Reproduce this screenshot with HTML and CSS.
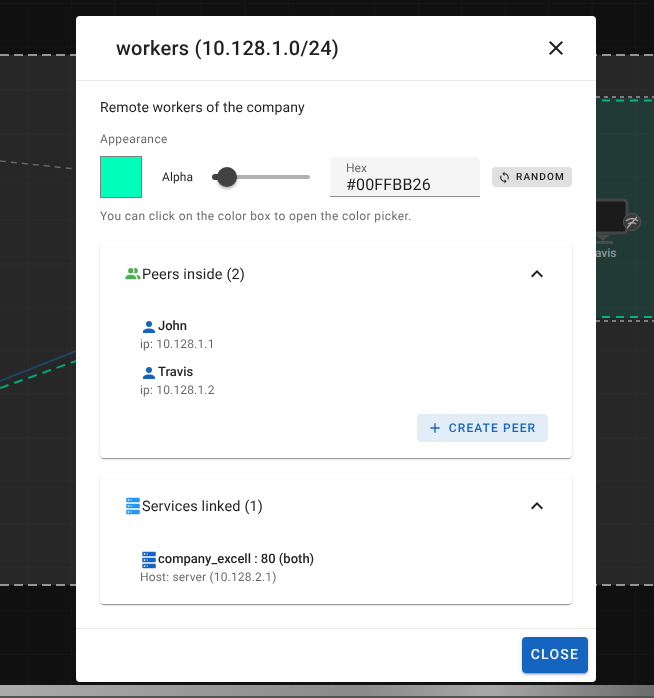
FILE: index.html
```html
<!DOCTYPE html>
<html lang="en">
<head>
<meta charset="utf-8">
<title>workers</title>
<link rel="stylesheet" href="styles.css">
</head>
<body>
<div class="canvas">
  <svg class="canvas-art" width="654" height="698" viewBox="0 0 654 698">
    <defs>
      <pattern id="grid" width="43.4" height="43.4" patternUnits="userSpaceOnUse" x="-16" y="3">
        <path d="M43.4 0H0V43.4" fill="none" stroke="#fff" stroke-opacity=".035"/>
      </pattern>
      <linearGradient id="strip" x1="0" x2="1" y1="0" y2="0">
        <stop offset="0" stop-color="#ababab"/>
        <stop offset=".55" stop-color="#8a8a8a"/>
        <stop offset=".75" stop-color="#a8a8a8"/>
        <stop offset="1" stop-color="#6b6b6b"/>
      </linearGradient>
    </defs>
    <rect width="654" height="698" fill="#101010"/>
    <rect y="55" width="654" height="530" fill="#272727"/>
    <rect x="560" y="98" width="94" height="220" fill="#213a35"/>
    <rect width="654" height="698" fill="url(#grid)"/>
    <path d="M0 55H654M0 585H654" stroke="#bdbdbd" stroke-width="1.5" stroke-dasharray="9 5" fill="none"/>
    <path d="M596 97H654M596 321H654" stroke="#9a9a9a" stroke-width="1.5" stroke-dasharray="4 4" fill="none"/>
    <path d="M602 100.5H654M602 317H654" stroke="#00b486" stroke-width="2" stroke-dasharray="8 6" fill="none"/>
    <path d="M0 161L76 169" stroke="#666" stroke-width="1.5" stroke-dasharray="6 5" fill="none"/>
    <path d="M0 381L76 351" stroke="#1d4464" stroke-width="2" fill="none"/>
    <path d="M0 388L76 361" stroke="#00a678" stroke-width="2" stroke-dasharray="9 6" fill="none"/>
    <rect x="560" y="200" width="67" height="33" rx="4" fill="#1b1b1b" stroke="#444" stroke-width="3"/>
    <path d="M596 235H610L603 241Z" fill="#4a4a4a"/>
    <rect x="590" y="241" width="23" height="3" fill="#4a4a4a"/>
    <circle cx="632" cy="222" r="8.5" fill="#3a3a3a" stroke="#555"/>
    <path d="M626 221Q632 216 638 221M628 224Q632 221 636 224M627 228L637 217" stroke="#aaa" stroke-width="1.3" fill="none"/>
    <rect y="685" width="654" height="13" fill="url(#strip)"/>
    <rect y="696" width="654" height="2" fill="#555"/>
  </svg>
  <span class="canvas-label">Travis</span>
</div>

<section class="dialog">
  <header class="dialog-title">
    <h2>workers (10.128.1.0/24)</h2>
    <svg class="close-icon" viewBox="0 0 24 24" width="24" height="24"><path d="M19 6.41 17.59 5 12 10.59 6.41 5 5 6.41 10.59 12 5 17.59 6.41 19 12 13.41 17.59 19 19 17.59 13.41 12z"/></svg>
  </header>

  <div class="dialog-content">
    <p class="description">Remote workers of the company</p>
    <p class="section-label">Appearance</p>
    <div class="appearance-row">
      <div class="swatch"></div>
      <span class="alpha-label">Alpha</span>
      <div class="slider"><span class="slider-fill"></span><span class="slider-thumb"></span></div>
      <div class="hex-field">
        <span class="hex-label">Hex</span>
        <span class="hex-value">#00FFBB26</span>
      </div>
      <button class="random-btn">
        <svg viewBox="0 0 24 24" width="13" height="13"><path d="M12 4V1L8 5l4 4V6c3.31 0 6 2.69 6 6 0 1.01-.25 1.97-.7 2.8l1.46 1.46C19.54 15.03 20 13.57 20 12c0-4.42-3.58-8-8-8zm0 14c-3.31 0-6-2.69-6-6 0-1.01.25-1.97.7-2.8L5.24 7.74C4.46 8.97 4 10.43 4 12c0 4.42 3.58 8 8 8v3l4-4-4-4v3z"/></svg>
        RANDOM
      </button>
    </div>
    <p class="helper">You can click on the color box to open the color picker.</p>

    <article class="card card-peers">
      <div class="card-head">
        <svg class="head-icon green" viewBox="0 0 24 24" width="18" height="18"><path d="M16 17V19H2V17S2 13 9 13 16 17 16 17M12.5 7.5A3.5 3.5 0 1 0 9 11A3.5 3.5 0 0 0 12.5 7.5M15.94 13A5.32 5.32 0 0 1 18 17V19H22V17S22 13.37 15.94 13M15 4A3.39 3.39 0 0 0 13.07 4.59A5 5 0 0 1 13.07 10.41A3.39 3.39 0 0 0 15 11A3.5 3.5 0 0 0 15 4Z"/></svg>
        <span class="head-title">Peers inside (2)</span>
        <svg class="chevron" viewBox="0 0 24 24" width="24" height="24"><path d="M12 8l-6 6 1.41 1.41L12 10.83l4.59 4.58L18 14z"/></svg>
      </div>
      <ul class="peer-list">
        <li class="item">
          <div class="item-name"><svg class="blue" viewBox="0 0 24 24" width="18" height="18"><path d="M12 4A4 4 0 0 1 16 8A4 4 0 0 1 12 12A4 4 0 0 1 8 8A4 4 0 0 1 12 4M12 14C16.42 14 20 15.79 20 18V20H4V18C4 15.79 7.58 14 12 14Z"/></svg>John</div>
          <div class="item-sub">ip: 10.128.1.1</div>
        </li>
        <li class="item">
          <div class="item-name"><svg class="blue" viewBox="0 0 24 24" width="18" height="18"><path d="M12 4A4 4 0 0 1 16 8A4 4 0 0 1 12 12A4 4 0 0 1 8 8A4 4 0 0 1 12 4M12 14C16.42 14 20 15.79 20 18V20H4V18C4 15.79 7.58 14 12 14Z"/></svg>Travis</div>
          <div class="item-sub">ip: 10.128.1.2</div>
        </li>
      </ul>
      <div class="card-actions">
        <button class="create-btn">
          <svg viewBox="0 0 24 24" width="16" height="16"><path d="M19 13h-6v6h-2v-6H5v-2h6V5h2v6h6v2z"/></svg>
          CREATE PEER
        </button>
      </div>
    </article>

    <article class="card card-services">
      <div class="card-head">
        <svg class="head-icon sky" viewBox="0 0 24 24" width="18" height="18"><path fill-rule="evenodd" d="M4 1H20A1 1 0 0 1 21 2V6A1 1 0 0 1 20 7H4A1 1 0 0 1 3 6V2A1 1 0 0 1 4 1M4 9H20A1 1 0 0 1 21 10V14A1 1 0 0 1 20 15H4A1 1 0 0 1 3 14V10A1 1 0 0 1 4 9M4 17H20A1 1 0 0 1 21 18V22A1 1 0 0 1 20 23H4A1 1 0 0 1 3 22V18A1 1 0 0 1 4 17M9 5H10V3H9V5M9 13H10V11H9V13M9 21H10V19H9V21M5 3V5H7V3H5M5 11V13H7V11H5M5 19V21H7V19H5Z"/></svg>
        <span class="head-title">Services linked (1)</span>
        <svg class="chevron" viewBox="0 0 24 24" width="24" height="24"><path d="M12 8l-6 6 1.41 1.41L12 10.83l4.59 4.58L18 14z"/></svg>
      </div>
      <ul class="peer-list service-list">
        <li class="item">
          <div class="item-name"><svg class="blue" viewBox="0 0 24 24" width="18" height="18"><path fill-rule="evenodd" d="M4 1H20A1 1 0 0 1 21 2V6A1 1 0 0 1 20 7H4A1 1 0 0 1 3 6V2A1 1 0 0 1 4 1M4 9H20A1 1 0 0 1 21 10V14A1 1 0 0 1 20 15H4A1 1 0 0 1 3 14V10A1 1 0 0 1 4 9M4 17H20A1 1 0 0 1 21 18V22A1 1 0 0 1 20 23H4A1 1 0 0 1 3 22V18A1 1 0 0 1 4 17M9 5H10V3H9V5M9 13H10V11H9V13M9 21H10V19H9V21M5 3V5H7V3H5M5 11V13H7V11H5M5 19V21H7V19H5Z"/></svg>company_excell : 80 (both)</div>
          <div class="item-sub">Host: server (10.128.2.1)</div>
        </li>
      </ul>
    </article>
  </div>

  <footer class="dialog-actions">
    <button class="close-btn">CLOSE</button>
  </footer>
</section>
</body>
</html>
```
FILE: styles.css
```css
* { box-sizing: border-box; }
html, body { margin: 0; height: 100%; }
body {
  width: 654px;
  height: 698px;
  overflow: hidden;
  position: relative;
  font-family: Roboto, "Liberation Sans", sans-serif;
  color: rgba(0,0,0,.87);
  background: #101010;
  display: flex;
  justify-content: center;
  padding: 16px 0 0 18px;
  text-rendering: geometricPrecision;
}
p, h2, ul { margin: 0; padding: 0; }
ul { list-style: none; }
button { font-family: inherit; border: 0; cursor: pointer; text-rendering: inherit; }

.canvas { position: absolute; inset: 0; }
.canvas-art { display: block; }
.canvas-label {
  position: absolute;
  left: 584px;
  top: 246px;
  font-size: 12px;
  font-weight: 500;
  color: #8f9795;
}

.dialog {
  position: relative;
  width: 520px;
  height: 666px;
  background: #fff;
  border-radius: 4px;
  display: flex;
  flex-direction: column;
  will-change: transform;
}
.dialog-title {
  height: 65px;
  flex: none;
  display: flex;
  align-items: center;
  justify-content: space-between;
  padding: 0 28px 0 40px;
  border-bottom: 1px solid #e8e8e8;
}
.dialog-title h2 { font-size: 20px; font-weight: 500; letter-spacing: .25px; line-height: 32px; }
.close-icon { fill: rgba(0,0,0,.87); display: block; }

.dialog-content { flex: 1; padding: 17px 24px 0; min-height: 0; }
.description { font-size: 14px; line-height: 20px; letter-spacing: .1px; }
.section-label { font-size: 12px; line-height: 16px; margin-top: 13px; color: rgba(0,0,0,.6); letter-spacing: .4px; }
.appearance-row { display: flex; align-items: center; height: 42px; margin-top: 9px; }
.swatch { width: 42px; height: 42px; background: #00ffbb; border: 1px solid #7f7f7f; flex: none; }
.alpha-label { font-size: 12px; margin-left: 20px; width: 50px; letter-spacing: .1px; }
.slider { position: relative; width: 98px; height: 4px; background: #b0b0b0; border-radius: 2px; flex: none; }
.slider-fill { position: absolute; left: 0; top: -1px; height: 6px; width: 15px; background: #424242; border-radius: 3px; }
.slider-thumb {
  position: absolute;
  left: 5px;
  top: -8px;
  width: 20px;
  height: 20px;
  border-radius: 50%;
  background: #424242;
  box-shadow: 0 2px 3px rgba(0,0,0,.3);
}
.hex-field {
  margin-left: 20px;
  width: 150px;
  height: 40px;
  background: #f5f5f5;
  border-bottom: 1px solid #8e8e8e;
  border-radius: 4px 4px 0 0;
  padding: 4px 16px 0;
  flex: none;
  display: flex;
  flex-direction: column;
}
.hex-label { font-size: 12px; line-height: 14px; color: rgba(0,0,0,.6); }
.hex-value { font-size: 16px; line-height: 19px; letter-spacing: .15px; }
.random-btn {
  margin-left: 12px;
  width: 80px;
  height: 20px;
  background: #e0e0e0;
  border-radius: 4px;
  font-size: 10px;
  font-weight: 500;
  letter-spacing: 1.1px;
  color: rgba(0,0,0,.87);
  display: flex;
  align-items: center;
  gap: 5px;
  padding: 0 0 0 6px;
  flex: none;
}
.random-btn svg { fill: rgba(0,0,0,.8); }
.helper { font-size: 12px; line-height: 16px; margin-top: 10px; color: rgba(0,0,0,.6); letter-spacing: .4px; }

.card {
  background: #fff;
  border-radius: 4px;
  box-shadow: 0 2px 1px -1px rgba(0,0,0,.28), 0 1px 1px 0 rgba(0,0,0,.14), 0 1px 3px 0 rgba(0,0,0,.12);
  padding: 0 24px;
}
.card-peers { height: 216px; margin-top: 18px; }
.card-services { height: 130px; margin-top: 16px; }
.card-head { height: 63px; display: flex; align-items: center; }
.head-icon { flex: none; }
.head-title { font-size: 14.5px; letter-spacing: .15px; flex: 1; position: relative; top: 1px; }
.chevron { fill: rgba(0,0,0,.87); flex: none; margin-right: -1px; }
.green { fill: #4caf50; }
.sky { fill: #2196f3; }
.blue { fill: #1565c0; }
.peer-list { padding: 12px 0 0 16px; }
.service-list { padding-top: 14px; margin-top: -1px; }
.item { margin-bottom: 10px; }
.item-name { font-size: 13px; font-weight: 500; line-height: 18px; display: flex; align-items: center; padding-top: 1px; margin-bottom: -1px; }
.item-name svg { flex: none; }
.item-sub { font-size: 12px; line-height: 18px; color: rgba(0,0,0,.6); letter-spacing: .17px; }
.card-actions { display: flex; justify-content: flex-end; margin-top: 15px; }
.create-btn {
  width: 131px;
  height: 28px;
  background: #e3edf7;
  border-radius: 4px;
  color: #1565c0;
  font-size: 12px;
  font-weight: 500;
  letter-spacing: 1.1px;
  display: flex;
  align-items: center;
  justify-content: center;
  gap: 6px;
  padding: 0 2px 0 0;
}
.create-btn svg { fill: #1565c0; }

.dialog-actions {
  height: 54px;
  flex: none;
  border-top: 1px solid #e8e8e8;
  display: flex;
  justify-content: flex-end;
  padding: 8px 8px 0 0;
}
.close-btn {
  width: 66px;
  height: 36px;
  background: #1565c0;
  color: #fff;
  border-radius: 4px;
  font-size: 14px;
  font-weight: 500;
  letter-spacing: 1.25px;
  box-shadow: 0 3px 1px -2px rgba(0,0,0,.2), 0 2px 2px 0 rgba(0,0,0,.14), 0 1px 5px 0 rgba(0,0,0,.12);
}
```
